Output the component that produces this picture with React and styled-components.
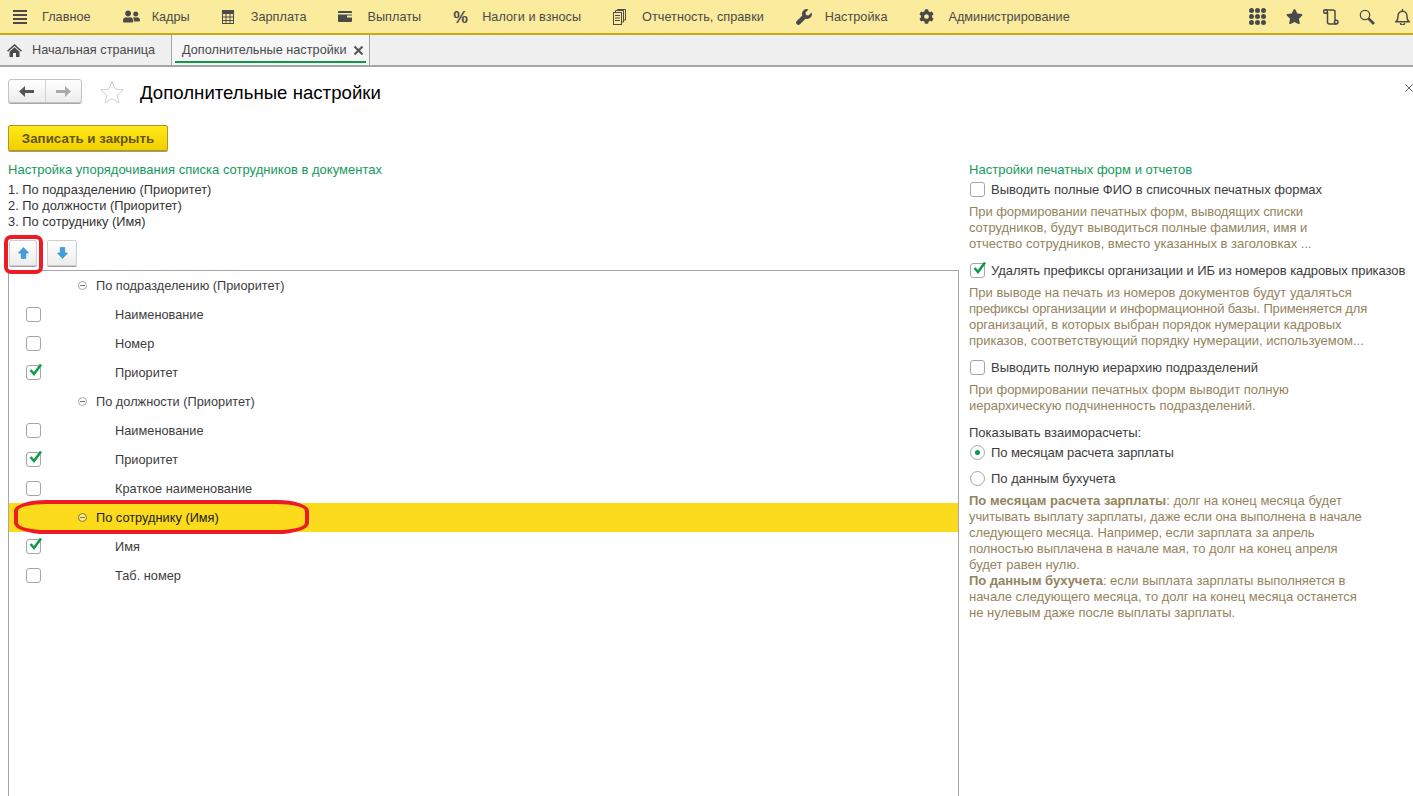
import React from "react";
import styled, { createGlobalStyle } from "styled-components";
import { FaUserFriends, FaCog, FaStar } from "react-icons/fa";

const Global = createGlobalStyle`
  html, body { margin: 0; padding: 0; background: #fff; }
  * { box-sizing: border-box; }
`;

const Page = styled.div`
  width: 1413px;
  height: 796px;
  overflow: hidden;
  display: flex;
  flex-direction: column;
  font-family: "Liberation Sans", Arial, sans-serif;
  font-size: 13px;
  letter-spacing: 0.02px;
  line-height: 16px;
  color: #3c3c3c;
`;

const TopBar = styled.div`
  flex: none;
  height: 35px;
  background: #fbec9d;
  border-bottom: 2px solid #c8aa12;
  display: flex;
  align-items: center;
  padding-left: 13px;
  color: #4a4a4a;
  font-size: 12.7px;
  overflow: hidden;
`;

const NavItem = styled.div`
  display: flex;
  align-items: center;
  margin-right: 32px;
  white-space: nowrap;
`;

const NavIcon = styled.span`
  flex: none;
  width: 29px;
  height: 18px;
  display: flex;
  align-items: center;
  color: #4a4a4a;
`;

const Percent = styled.span`
  font-size: 16.5px;
  font-weight: 700;
  line-height: 18px;
`;

const TopTools = styled.div`
  margin-left: auto;
  display: flex;
  align-items: center;
  flex: none;
  width: 164px;
  gap: 20px;
  color: #4a4a4a;
  svg { flex: none; }
`;

const Tabs = styled.div`
  flex: none;
  height: 32px;
  background: #f0f0f0;
  border-bottom: 2px solid #a5a5a5;
  display: flex;
  font-size: 12.7px;
`;

const HomeTab = styled.div`
  width: 172px;
  display: flex;
  align-items: center;
  gap: 10px;
  padding-left: 7px;
  color: #4a4a4a;
  border-right: 1px solid #a5a5a5;
`;

const ActiveTab = styled.div`
  position: relative;
  width: 198px;
  display: flex;
  align-items: center;
  gap: 7px;
  padding-left: 10px;
  background: #f6f6f6;
  color: #4a4a4a;
  border-right: 1px solid #a5a5a5;
  &::after {
    content: "";
    position: absolute;
    left: 3px;
    right: 3px;
    bottom: 2px;
    height: 2px;
    background: #0f9a4a;
  }
`;

const Form = styled.div`
  flex: 1;
  min-height: 0;
  padding: 12px 0 0 8px;
  display: flex;
  flex-direction: column;
`;

const Header = styled.div`
  height: 24px;
  display: flex;
  align-items: center;
  position: relative;
`;

const NavGroup = styled.div`
  width: 74px;
  height: 24px;
  display: flex;
  border: 1px solid #c4c4c4;
  border-radius: 3px;
  background: linear-gradient(#ffffff, #ececec);
  box-shadow: 0 1px 0 #a8a8a8;
`;

const NavBtn = styled.div`
  flex: 1;
  display: flex;
  align-items: center;
  justify-content: center;
  & + & { border-left: 1px solid #d2d2d2; }
`;

const Title = styled.div`
  font-size: 18.6px;
  line-height: 26px;
  padding-top: 3px;
  color: #000;
  margin-left: 16px;
`;

const StarWrap = styled.span`
  margin-left: 18px;
  padding-top: 2px;
  display: flex;
`;

const CloseForm = styled.span`
  position: absolute;
  right: 0;
  top: 5px;
  display: flex;
`;

const SaveButton = styled.div`
  margin-top: 22px;
  width: 160px;
  height: 26px;
  padding-top: 1px;
  display: flex;
  align-items: center;
  justify-content: center;
  flex: none;
  border: 1px solid #ab9530;
  border-radius: 2px;
  background: linear-gradient(#ffe81a, #f2d000);
  box-shadow: 0 1px 0 #a89a60;
  font-size: 13.33px;
  font-weight: 700;
  color: #65560f;
`;

const Columns = styled.div`
  flex: 1;
  min-height: 0;
  margin-top: 11px;
  display: flex;
`;

const LeftCol = styled.div`
  flex: none;
  width: 951px;
  display: flex;
  flex-direction: column;
`;

const RightCol = styled.div`
  flex: none;
  margin-left: 10px;
  width: 440px;
  display: flex;
  flex-direction: column;
`;

const Heading = styled.div`
  color: #159a5c;
  margin-bottom: ${p => p.$mb ?? 3}px;
  white-space: nowrap;
`;

const OrderLine = styled.div`
  color: #333;
  font-size: 12.8px;
`;

const MoveBar = styled.div`
  display: flex;
  gap: 10px;
  margin: 10px 0 4px 1px;
`;

const MoveButton = styled.div`
  position: relative;
  width: ${p => p.$w}px;
  height: 26px;
  display: flex;
  align-items: center;
  justify-content: center;
  border: 1px solid #cfcfcf;
  border-radius: 2px;
  background: linear-gradient(#ffffff, #ededed);
  box-shadow: 0 1px 0 #a0a0a0;
`;

const RedBox = styled.span`
  position: absolute;
  left: -6px;
  top: -6px;
  width: 39px;
  height: 39px;
  border: 4px solid #ed1c24;
  border-radius: 7px;
`;

const Tree = styled.div`
  flex: 1;
  min-height: 0;
  border: 1px solid #a5a5a5;
  border-bottom: 0;
  font-size: 12.75px;
`;

const Row = styled.div`
  position: relative;
  height: 29px;
  display: flex;
  align-items: center;
  background: ${p => (p.$selected ? "#fbdb1c" : "transparent")};
  color: ${p => (p.$selected ? "#222" : "#3c3c3c")};
  padding-left: ${p => (p.$group ? 69 : 17)}px;
`;

const RedOval = styled.span`
  position: absolute;
  left: 5px;
  top: -3px;
  width: 295px;
  height: 34px;
  border: 4px solid #ed1c24;
  border-radius: 32px / 11px;
`;

const Expander = styled.span`
  flex: none;
  width: 9px;
  height: 9px;
  border: 1px solid ${p => (p.$selected ? "#8a7a20" : "#a8a8a8")};
  border-radius: 50%;
  background: ${p => (p.$selected ? "#fbe98a" : "#fff")};
  margin-right: 9px;
  display: flex;
  align-items: center;
  justify-content: center;
  &::before {
    content: "";
    width: 5px;
    height: 1px;
    background: #777;
  }
`;

const Box = styled.span`
  position: relative;
  flex: none;
  width: 15px;
  height: 15px;
  background: #fff;
  border: 1px solid #a6a6a6;
  border-radius: 3px;
  svg { position: absolute; left: 2px; top: -3px; }
`;

const ItemLabel = styled.span`
  margin-left: 74px;
`;

const OptionRow = styled.div`
  height: 16px;
  display: flex;
  align-items: center;
  gap: 6px;
  margin-left: 1px;
  margin-bottom: ${p => p.$mb ?? 7}px;
  white-space: nowrap;
`;

const OptionText = styled.span`
  padding-top: 2px;
  letter-spacing: ${p => p.$ls ?? 0}px;
`;

const Help = styled.div`
  color: #93845e;
  margin-bottom: ${p => p.$mb ?? 10}px;
  white-space: nowrap;
  b { font-weight: 700; }
`;

const HelpLine = styled.div`
  letter-spacing: ${p => p.$ls ?? 0}px;
`;

const PlainLabel = styled.div`
  padding-top: 1px;
  margin-bottom: 3px;
`;

const Radio = styled.span`
  flex: none;
  width: 15px;
  height: 15px;
  border: 1px solid #a6a6a6;
  border-radius: 50%;
  background: #fff;
  display: flex;
  align-items: center;
  justify-content: center;
  &::before {
    content: "";
    width: 5px;
    height: 5px;
    border-radius: 50%;
    background: ${p => (p.$on ? "#0f9a4a" : "transparent")};
  }
`;

const Burger = () => (
  <svg width="14" height="14" viewBox="0 0 14 14" fill="#4a4a4a">
    <rect y="0" width="14" height="2" /><rect y="4" width="14" height="2" />
    <rect y="8" width="14" height="2" /><rect y="12" width="14" height="2" />
  </svg>
);
const Calc = () => (
  <svg width="12" height="14" viewBox="0 0 12 14" fill="none" stroke="#4a4a4a">
    <rect x=".5" y=".5" width="11" height="13" strokeWidth="1" />
    <rect x="0" y="0" width="12" height="4" fill="#4a4a4a" stroke="none" />
    <path d="M4 4v10M8 4v10M0 7h12M0 10.500h12" strokeWidth="1" />
  </svg>
);
const Wallet = () => (
  <svg width="14" height="11" viewBox="0 0 14 11" fill="#4a4a4a">
    <path d="M1 0h12a1 1 0 0 1 1 1v1H0V1a1 1 0 0 1 1-1z" />
    <path d="M0 3.500h14v1H9v2h5V10a1 1 0 0 1-1 1H1a1 1 0 0 1-1-1z" />
  </svg>
);
const Docs = () => (
  <svg width="13" height="16" viewBox="0 0 13 16" fill="none" stroke="#4a4a4a" strokeWidth="1">
    <rect x=".5" y="3.500" width="8" height="12" />
    <path d="M2.500 3V1.500h8V13H9M4.500 1V.5h8V11H11" />
    <path d="M2 6.500h5M2 9h5M2 11.500h5" />
  </svg>
);
const Wrench = () => (
  <svg width="16" height="16" viewBox="0 0 16 16" fill="#4a4a4a">
    <path d="M15.500 3.500L12.500 6.500 10 6 9.500 3.500 12.500.5A4.700 4.700 0 0 0 6.300 6.500L.8 12a2.200 2.200 0 0 0 3.200 3.200l5.500-5.500A4.700 4.700 0 0 0 15.500 3.500z" />
  </svg>
);
const Grid = () => (
  <svg width="17" height="17" viewBox="0 0 17 17" fill="#4a4a4a">
    {[2.500, 8.500, 14.500].flatMap(y =>
      [2.500, 8.500, 14.500].map(x => <circle key={`${x}-${y}`} cx={x} cy={y} r="2.500" />)
    )}
  </svg>
);
const Scroll = () => (
  <svg width="16" height="16" viewBox="0 0 16 16" fill="none" stroke="#4a4a4a" strokeWidth="1.500">
    <path d="M2.500 1h7.500a2 2 0 0 1 2 2v9" />
    <path d="M4.500 3v10a2 2 0 0 0 2 2h7" />
    <circle cx="2.500" cy="2.500" r="1.800" />
    <circle cx="13.200" cy="13" r="1.800" />
  </svg>
);
const Search = () => (
  <svg width="16" height="16" viewBox="0 0 16 16" fill="none" stroke="#4a4a4a">
    <circle cx="6" cy="6" r="4.700" strokeWidth="1.300" />
    <path d="M9.500 9.500l5.500 5.500" strokeWidth="2.600" />
  </svg>
);
const Bell = () => (
  <svg width="15" height="16" viewBox="0 0 15 16" fill="none" stroke="#4a4a4a" strokeWidth="1.400">
    <path d="M1 12.700c1.500-1 2-2.500 2-5.500 0-3 2-5 4.500-5s4.500 2 4.500 5c0 3 .5 4.500 2 5.500z" />
    <path d="M5.500 14a2 2 0 0 0 4 0M7.500 0v2" />
  </svg>
);
const HomeIcon = () => (
  <svg width="15" height="13" viewBox="0 0 15 13" fill="#4a4a4a">
    <path d="M7.500 0L15 6.800l-1 1L7.500 2 1 7.800l-1-1z" />
    <path d="M2.500 7.700L7.500 3.200l5 4.500V13H9V9H6v4H2.500z" />
  </svg>
);
const Cross = ({ size = 9, w = 2, color = "#555" }) => (
  <svg width={size} height={size} viewBox="0 0 9 9" stroke={color} strokeWidth={w} fill="none">
    <path d="M.5.5l8 8M8.500.5l-8 8" />
  </svg>
);
const HArrow = ({ color, flip }) => (
  <svg width="15" height="11" viewBox="0 0 15 11" fill={color} style={flip ? { transform: "scaleX(-1)" } : undefined}>
    <path d="M6 0v4h9v3H6v4L0 5.500z" />
  </svg>
);
const VArrow = ({ down }) => (
  <svg width="11" height="12" viewBox="0 0 12 13" style={down ? { transform: "scaleY(-1)" } : undefined}>
    <path d="M6 .5l5.500 6H8.500v6h-5v-6H.5z" fill="#3f9fdf" stroke="#2b82bd" strokeWidth=".6" />
  </svg>
);
const OutlineStar = () => (
  <svg width="24" height="24" viewBox="0 0 24 24" fill="#fff" stroke="#cfd2d4" strokeWidth="1">
    <path d="M12 1.500l3.100 7.700 8.200.6-6.300 5.300 2 8-7-4.400-7 4.400 2-8L.7 9.800l8.200-.6z" />
  </svg>
);
const Check = () => (
  <svg width="14" height="14" viewBox="0 0 14 14" fill="none" stroke="#0f9a4a" strokeWidth="2.600">
    <path d="M1.500 7l3.500 4L12 1.500" />
  </svg>
);

const CheckBox = ({ on }) => <Box>{on && <Check />}</Box>;

const nav = [
  [<Burger />, "Главное"],
  [<FaUserFriends size={17} />, "Кадры"],
  [<Calc />, "Зарплата"],
  [<Wallet />, "Выплаты"],
  [<Percent>%</Percent>, "Налоги и взносы"],
  [<Docs />, "Отчетность, справки"],
  [<Wrench />, "Настройка"],
  [<FaCog size={15} />, "Администрирование"],
];

const tree = [
  { g: "По подразделению (Приоритет)" },
  { t: "Наименование" },
  { t: "Номер" },
  { t: "Приоритет", on: true },
  { g: "По должности (Приоритет)" },
  { t: "Наименование" },
  { t: "Приоритет", on: true },
  { t: "Краткое наименование" },
  { g: "По сотруднику (Имя)", sel: true },
  { t: "Имя", on: true },
  { t: "Таб. номер" },
];

export default function App() {
  return (
    <Page>
      <Global />
      <TopBar>
        {nav.map(([icon, label]) => (
          <NavItem key={label}>
            <NavIcon>{icon}</NavIcon>
            {label}
          </NavItem>
        ))}
        <TopTools>
          <Grid />
          <FaStar size={17} />
          <Scroll />
          <Search />
          <Bell />
        </TopTools>
      </TopBar>
      <Tabs>
        <HomeTab><HomeIcon />Начальная страница</HomeTab>
        <ActiveTab>Дополнительные настройки<Cross /></ActiveTab>
      </Tabs>
      <Form>
        <Header>
          <NavGroup>
            <NavBtn><HArrow color="#555" /></NavBtn>
            <NavBtn><HArrow color="#aaa" flip /></NavBtn>
          </NavGroup>
          <StarWrap><OutlineStar /></StarWrap>
          <Title>Дополнительные настройки</Title>
          <CloseForm><Cross size={8} w={1} /></CloseForm>
        </Header>
        <SaveButton>Записать и закрыть</SaveButton>
        <Columns>
          <LeftCol>
            <Heading $mb={4}>Настройка упорядочивания списка сотрудников в документах</Heading>
            <OrderLine>1. По подразделению (Приоритет)</OrderLine>
            <OrderLine>2. По должности (Приоритет)</OrderLine>
            <OrderLine>3. По сотруднику (Имя)</OrderLine>
            <MoveBar>
              <MoveButton $w={28}><VArrow /><RedBox /></MoveButton>
              <MoveButton $w={30}><VArrow down /></MoveButton>
            </MoveBar>
            <Tree>
              {tree.map((r, i) =>
                r.g ? (
                  <Row key={i} $group $selected={r.sel}>
                    <Expander $selected={r.sel} />
                    {r.g}
                    {r.sel && <RedOval />}
                  </Row>
                ) : (
                  <Row key={i}>
                    <CheckBox on={r.on} />
                    <ItemLabel>{r.t}</ItemLabel>
                  </Row>
                )
              )}
            </Tree>
          </LeftCol>
          <RightCol>
            <Heading>Настройки печатных форм и отчетов</Heading>
            <OptionRow><CheckBox /><OptionText>Выводить полные ФИО в списочных печатных формах</OptionText></OptionRow>
            <Help>
              <HelpLine $ls={-0.06}>При формировании печатных форм, выводящих списки</HelpLine>
              <HelpLine $ls={-0.03}>сотрудников, будут выводиться полные фамилия, имя и</HelpLine>
              <HelpLine>отчество сотрудников, вместо указанных в заголовках ...</HelpLine>
            </Help>
            <OptionRow><CheckBox on /><OptionText $ls={-0.06}>Удалять префиксы организации и ИБ из номеров кадровых приказов</OptionText></OptionRow>
            <Help>
              <HelpLine>При выводе на печать из номеров документов будут удаляться</HelpLine>
              <HelpLine $ls={-0.17}>префиксы организации и информационной базы. Применяется для</HelpLine>
              <HelpLine $ls={-0.05}>организаций, в которых выбран порядок нумерации кадровых</HelpLine>
              <HelpLine>приказов, соответствующий порядку нумерации, используемом...</HelpLine>
            </Help>
            <OptionRow><CheckBox /><OptionText>Выводить полную иерархию подразделений</OptionText></OptionRow>
            <Help>
              <HelpLine>При формировании печатных форм выводит полную</HelpLine>
              <HelpLine>иерархическую подчиненность подразделений.</HelpLine>
            </Help>
            <PlainLabel>Показывать взаиморасчеты:</PlainLabel>
            <OptionRow $mb={10}><Radio $on /><OptionText $ls={-0.1}>По месяцам расчета зарплаты</OptionText></OptionRow>
            <OptionRow><Radio /><OptionText>По данным бухучета</OptionText></OptionRow>
            <Help>
              <HelpLine><b>По месяцам расчета зарплаты</b>: долг на конец месяца будет</HelpLine>
              <HelpLine $ls={-0.12}>учитывать выплату зарплаты, даже если она выполнена в начале</HelpLine>
              <HelpLine $ls={-0.06}>следующего месяца. Например, если зарплата за апрель</HelpLine>
              <HelpLine $ls={-0.07}>полностью выплачена в начале мая, то долг на конец апреля</HelpLine>
              <HelpLine>будет равен нулю.</HelpLine>
              <HelpLine $ls={-0.03}><b>По данным бухучета</b>: если выплата зарплаты выполняется в</HelpLine>
              <HelpLine>начале следующего месяца, то долг на конец месяца останется</HelpLine>
              <HelpLine>не нулевым даже после выплаты зарплаты.</HelpLine>
            </Help>
          </RightCol>
        </Columns>
      </Form>
    </Page>
  );
}
